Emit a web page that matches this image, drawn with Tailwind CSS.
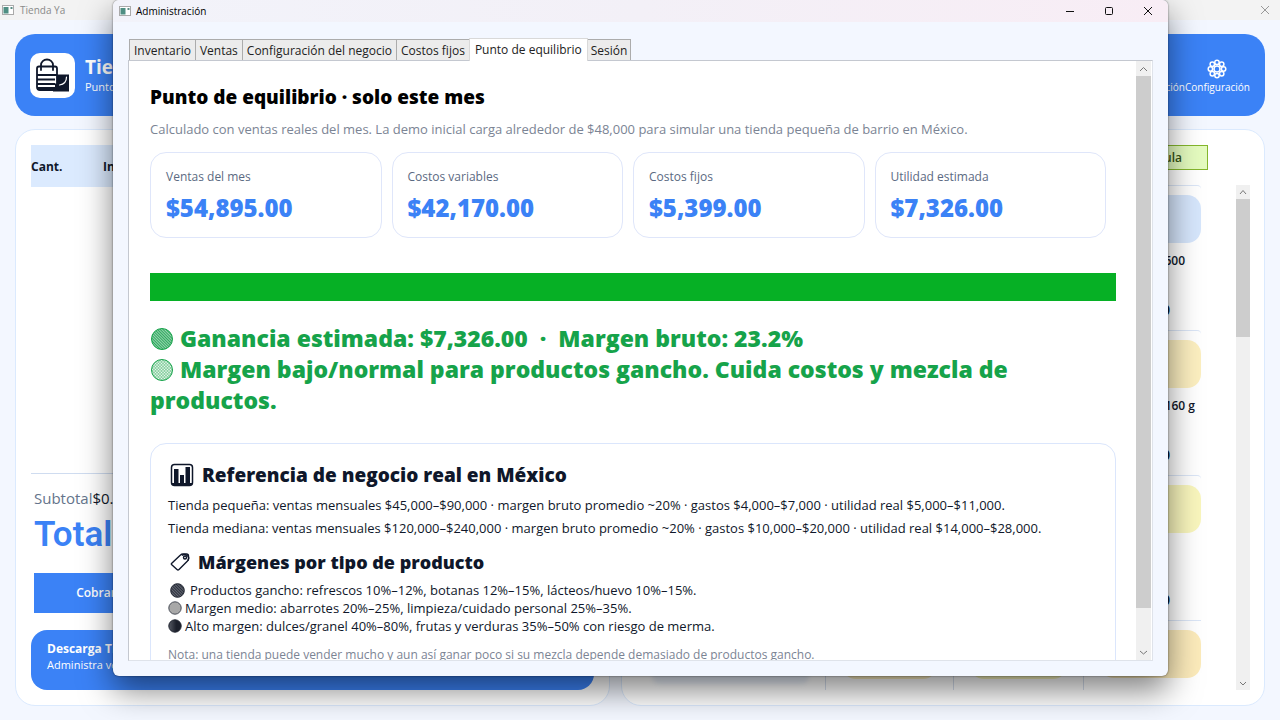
<!DOCTYPE html>
<html lang="es">
<head>
    <meta charset="UTF-8">
    <meta name="viewport" content="width=device-width, initial-scale=1.0">
    <title>Tienda Ya - Administración</title>
    <script src="https://cdn.jsdelivr.net/npm/@tailwindcss/browser@4"></script>
</head>
<body class="relative h-screen overflow-hidden bg-[#f3f7ff] font-['Open_Sans','Noto_Sans',sans-serif] text-[#0f172a]">

    <!-- Shared SVG patterns for the round bullets -->
    <svg class="absolute size-0" aria-hidden="true">
        <defs>
            <pattern id="greenLines" width="2" height="2" patternUnits="userSpaceOnUse" patternTransform="rotate(-45)">
                <rect width="2" height="2" fill="#2fa860"/><rect width="0.7" height="2" fill="#c3e8cf"/>
            </pattern>
            <pattern id="greenDots" width="3" height="3" patternUnits="userSpaceOnUse">
                <rect width="3" height="3" fill="#8fd2a6"/><circle cx="1" cy="1" r="0.8" fill="#f2fbf5"/><circle cx="2.5" cy="2.5" r="0.6" fill="#f2fbf5"/>
            </pattern>
            <pattern id="darkLines" width="2" height="2" patternUnits="userSpaceOnUse" patternTransform="rotate(-45)">
                <rect width="2" height="2" fill="#2b303c"/><rect width="0.6" height="2" fill="#8a8e97"/>
            </pattern>
            <linearGradient id="darkShade" x1="0" x2="1"><stop offset="0" stop-color="#555963"/><stop offset="0.6" stop-color="#1c202b"/></linearGradient>
        </defs>
    </svg>

    <!-- Main window -->
    <div class="flex h-full flex-col">
        <div class="flex h-5 shrink-0 items-center gap-[6px] bg-[#f3f3f3] pl-[2px] pr-[10px] text-[10px] text-[#8a8a8a]">
            <svg class="size-3" viewBox="0 0 12 12"><rect x="0.5" y="1.5" width="11" height="9" fill="#fff" stroke="#aaa"/><rect x="1.5" y="3" width="5" height="6.5" fill="#4f8f83"/><rect x="8.5" y="3" width="2" height="2" fill="#5a8c84"/></svg>
            <span>Tienda Ya</span>
            <button class="ml-auto" aria-label="Cerrar ventana"><svg class="size-[10px]" viewBox="0 0 10 10" stroke="#999" fill="none"><path d="M1 1l8 8M9 1l-8 8"/></svg></button>
        </div>

        <div class="flex min-h-0 flex-1 flex-col gap-[13px] px-[15px] pb-[14px] pt-[14px]">
            <header class="flex h-[82px] shrink-0 items-center rounded-[20px] bg-[#3b82f6] px-[15px] text-white">
                <div class="flex size-[45px] items-center justify-center rounded-[10px] bg-white">
                    <svg class="size-[36px]" viewBox="0 0 36 36" fill="none" stroke="#0f172a" stroke-width="1.8" stroke-linejoin="round">
                        <path d="M2 11.500q0-2 2-2h16q2 0 2 2V33H5q-3 0-3-3z" fill="#fff"/>
                        <path d="M6 13V8a6 5.500 0 0 1 12 0v5" stroke-linecap="round"/>
                        <path d="M2 18h20M2 22.500h18M2 27h18M2 31h18"/>
                        <path d="M22 17.500h12v17H18v-3h2v-5h2z" fill="#0f172a" stroke="none"/>
                        <path d="M31.500 20q0 7-7 8" stroke="#fff" stroke-linecap="round" stroke-width="1.200"/>
                    </svg>
                </div>
                <div class="ml-[10px]">
                    <h1 class="text-[19px] font-bold leading-6">Tienda Ya</h1>
                    <p class="text-[11px] leading-4">Punto de venta</p>
                </div>
                <nav class="ml-auto flex items-end pt-1 text-[10px] leading-4">
                    <button>Administración</button>
                    <button class="flex flex-col items-center">
                        <svg class="size-5" viewBox="0 0 20 20" fill="none" stroke="#fff" stroke-width="1.500">
                            <circle cx="10" cy="10" r="3"/>
                            <circle cx="10" cy="3.400" r="2.200"/><circle cx="14.700" cy="5.300" r="2.200"/><circle cx="16.600" cy="10" r="2.200"/><circle cx="14.700" cy="14.700" r="2.200"/>
                            <circle cx="10" cy="16.600" r="2.200"/><circle cx="5.300" cy="14.700" r="2.200"/><circle cx="3.400" cy="10" r="2.200"/><circle cx="5.300" cy="5.300" r="2.200"/>
                        </svg>
                        <span>Configuración</span>
                    </button>
                </nav>
            </header>

            <div class="grid min-h-0 flex-1 grid-cols-[595fr_645fr] grid-rows-[minmax(0,1fr)] gap-[11px]">
                <!-- Ticket -->
                <section class="flex flex-col rounded-[20px] border border-[#dbeafe] bg-white p-[15px]">
                    <table class="w-full bg-[#dbeafe] text-left text-[12px]">
                        <thead><tr class="h-[42px]"><th class="w-[72px] pt-[2px] font-bold">Cant.</th><th class="pt-[2px] font-bold">Inventario</th></tr></thead>
                    </table>
                    <div class="mt-auto border-t border-[#cfdcf0] px-[3px] pt-[14px]">
                        <div class="flex text-[15px] leading-5"><span class="text-[#64748b]">Subtotal</span><span>$0.00</span></div>
                        <div class="pt-[2px] font-[Roboto,sans-serif] text-[35px] font-semibold leading-[50px] text-[#3b82f6]">Total</div>
                        <button class="mt-[13px] h-10 w-[124px] bg-[#3b82f6] text-[12px] font-semibold text-white">Cobrar</button>
                    </div>
                    <button class="mt-[17px] h-[60px] shrink-0 rounded-[16px] bg-[#3b82f6] px-4 pb-[6px] text-left leading-4 text-white">
                        <span class="block text-[12px] font-bold">Descarga Tienda Ya</span>
                        <span class="block text-[11px]">Administra ventas</span>
                    </button>
                </section>

                <!-- Products -->
                <section class="flex flex-col rounded-[20px] border border-[#dbeafe] bg-white px-[14px] pb-[15px] pt-[15px]">
                    <div class="flex justify-end pr-[42px]">
                        <button class="h-[25px] w-[90px] border border-[#84b62c] bg-[#e4fbbf] pr-[25px] text-right text-[12px] font-semibold text-[#365314]">ula</button>
                    </div>
                    <div class="mt-[15px] flex min-h-0 flex-1">
                        <div class="grid min-h-0 flex-1 grid-cols-[190fr_128fr_129fr_117fr] grid-rows-[minmax(0,1fr)] overflow-hidden">
                            <div class="flex flex-col justify-end border-r border-[#d5deec] px-4 pb-[6px]"><div class="h-7 rounded-lg bg-[#e8eef8] blur-[2px]"></div></div>
                            <div class="flex flex-col justify-end border-r border-[#d5deec] px-4 pb-[11px]"><div class="h-12 rounded-[14px] bg-[#fcefc0]"></div></div>
                            <div class="flex flex-col justify-end border-r border-[#d5deec] px-4 pb-[11px]"><div class="h-12 rounded-[14px] bg-[#f9f6bd]"></div></div>
                            <div class="text-right text-[12px] font-semibold leading-4">
                                <article class="h-[145px] rounded-tr border-t border-[#dbe6f7] pt-[9px]">
                                    <div class="ml-4 h-12 rounded-[14px] bg-[#d6e6fc]"></div>
                                    <p class="pr-4 pt-[10px]">600</p>
                                    <p class="pr-[31px] pt-[33px] text-[14px] font-bold">0</p>
                                </article>
                                <article class="h-[145px] rounded-tr border-t border-[#dbe6f7] pt-[9px]">
                                    <div class="ml-4 h-12 rounded-[14px] bg-[#fcefc0]"></div>
                                    <p class="pr-[6px] pt-[10px]">160 g</p>
                                    <p class="pr-[31px] pt-[33px] text-[14px] font-bold">0</p>
                                </article>
                                <article class="h-[145px] rounded-tr border-t border-[#dbe6f7] pt-[9px]">
                                    <div class="ml-4 h-12 rounded-[14px] bg-[#f9f6bd]"></div>
                                    <p class="pr-[31px] pt-[59px] text-[14px] font-bold">0</p>
                                </article>
                                <article class="border-t border-[#dbe6f7] pt-[9px]">
                                    <div class="ml-4 h-12 rounded-[14px] bg-[#fcebbb]"></div>
                                </article>
                            </div>
                        </div>
                        <div class="ml-[35px] flex w-[14px] flex-col bg-[#f0f0f0]">
                            <svg class="h-[14px] w-full shrink-0" viewBox="0 0 14 14" fill="none" stroke="#777"><path d="M4 9l3-3.500L10 9"/></svg>
                            <div class="h-[138px] bg-[#cdcdcd]"></div>
                            <svg class="mt-auto h-[14px] w-full shrink-0" viewBox="0 0 14 14" fill="none" stroke="#777"><path d="M4 6l3 3 3-3"/></svg>
                        </div>
                    </div>
                </section>
            </div>
        </div>
    </div>

    <!-- Administration window -->
    <div role="dialog" aria-label="Administración" class="absolute bottom-[44px] left-[113px] right-[112px] top-0 flex flex-col rounded-[6px] bg-[#f3f7ff] shadow-[0_0_2px_rgba(0,0,0,0.6),0_14px_32px_rgba(0,0,0,0.5)]">
        <div class="flex h-[22px] shrink-0 items-center gap-[5px] rounded-t-[6px] bg-linear-to-r from-[#f2f3fa] via-[#f3f0f7] to-[#f8edf5] pl-[6px] pr-[15px] text-[10px] text-black">
            <svg class="size-3" viewBox="0 0 12 12"><rect x="0.5" y="1.5" width="11" height="9" fill="#fff" stroke="#aaa"/><rect x="1.5" y="3" width="5" height="6.5" fill="#4f8f83"/><rect x="8.500" y="3" width="2" height="2" fill="#5a8c84"/></svg>
            <span>Administración</span>
            <div class="ml-auto flex items-center gap-[29px]">
                <button aria-label="Minimizar"><svg class="size-[10px]" viewBox="0 0 10 10" stroke="#111"><path d="M1 5.500h8"/></svg></button>
                <button aria-label="Maximizar"><svg class="size-[10px]" viewBox="0 0 10 10" fill="none" stroke="#111"><rect x="1.500" y="1.500" width="7" height="7" rx="1"/></svg></button>
                <button aria-label="Cerrar"><svg class="size-[10px]" viewBox="0 0 10 10" stroke="#111"><path d="M1 1l8 8M9 1l-8 8"/></svg></button>
            </div>
        </div>

        <div class="flex min-h-0 flex-1 flex-col px-[15px] pb-[15px] pt-[16px]">
            <div role="tablist" class="flex items-end pl-px text-[12px] leading-[18px] text-[#222]">
                <button role="tab" class="h-[21px] border border-b-0 border-[#acacac] bg-[#ececec] px-1 pt-[2px]">Inventario</button>
                <button role="tab" class="h-[21px] border border-b-0 border-l-0 border-[#acacac] bg-[#ececec] px-1 pt-[2px]">Ventas</button>
                <button role="tab" class="h-[21px] border border-b-0 border-l-0 border-[#acacac] bg-[#ececec] px-1 pt-[2px]">Configuración del negocio</button>
                <button role="tab" class="h-[21px] border-t border-[#acacac] bg-[#ececec] px-1 pt-[2px]">Costos fijos</button>
                <button role="tab" aria-selected="true" class="relative z-10 -mb-px h-[23px] border border-b-0 border-[#d9d9d9] bg-white px-[5px]">Punto de equilibrio</button>
                <button role="tab" class="h-[21px] border border-b-0 border-l-0 border-[#acacac] bg-[#ececec] px-[3px] pt-[2px]">Sesión</button>
            </div>

            <div role="tabpanel" class="flex min-h-0 flex-1 border border-[#c4c8d0] border-b-[#dfe3ea] border-r-[#dfe3ea] bg-white pr-[1px]">
                <div class="min-h-0 flex-1 overflow-hidden pl-[21px] pr-[20px] pt-[24px]">
                    <h2 class="text-[19px] font-extrabold leading-6 text-black">Punto de equilibrio · solo este mes</h2>
                    <p class="mt-[10px] whitespace-nowrap text-[13px] leading-5 text-[#7b8494]">Calculado con ventas reales del mes. La demo inicial carga alrededor de $48,000 para simular una tienda pequeña de barrio en México.</p>

                    <div class="mr-[10px] mt-[13px] grid grid-cols-4 gap-[10px]">
                        <div class="h-[86px] rounded-[16px] border border-[#dfe6fa] px-[15px] pt-[14px]">
                            <p class="text-[12px] leading-5 text-[#5b6a82]">Ventas del mes</p>
                            <p class="mt-[5px] text-[24px] font-extrabold leading-8 text-[#3b82f6]">$54,895.00</p>
                        </div>
                        <div class="h-[86px] rounded-[16px] border border-[#dfe6fa] px-[15px] pt-[14px]">
                            <p class="text-[12px] leading-5 text-[#5b6a82]">Costos variables</p>
                            <p class="mt-[5px] text-[24px] font-extrabold leading-8 text-[#3b82f6]">$42,170.00</p>
                        </div>
                        <div class="h-[86px] rounded-[16px] border border-[#dfe6fa] px-[15px] pt-[14px]">
                            <p class="text-[12px] leading-5 text-[#5b6a82]">Costos fijos</p>
                            <p class="mt-[5px] text-[24px] font-extrabold leading-8 text-[#3b82f6]">$5,399.00</p>
                        </div>
                        <div class="h-[86px] rounded-[16px] border border-[#dfe6fa] px-[15px] pt-[14px]">
                            <p class="text-[12px] leading-5 text-[#5b6a82]">Utilidad estimada</p>
                            <p class="mt-[5px] text-[24px] font-extrabold leading-8 text-[#3b82f6]">$7,326.00</p>
                        </div>
                    </div>

                    <div role="progressbar" aria-label="Punto de equilibrio" aria-valuenow="100" class="mt-[35px] h-7 bg-[#06b025]"></div>

                    <p class="mt-[22px] text-[23px] font-extrabold leading-[31px] text-[#16a34a]">
                        <svg class="inline size-6 align-[-4px]" viewBox="0 0 24 24"><circle cx="12" cy="12" r="10.500" fill="url(#greenLines)" stroke="#16a34a"/></svg>
                        Ganancia estimada: $7,326.00 &nbsp;·&nbsp; Margen bruto: 23.2%<br>
                        <svg class="inline size-6 align-[-4px]" viewBox="0 0 24 24"><circle cx="12" cy="12" r="10.500" fill="url(#greenDots)" stroke="#16a34a"/></svg>
                        Margen bajo/normal para productos gancho. Cuida costos y mezcla de<br>productos.
                    </p>

                    <div class="mt-[27px] rounded-[16px] border border-[#dbe6fc] px-[17px] pb-5 pt-[19px]">
                        <h3 class="flex items-center gap-[8px] pl-[2px] text-[19px] font-extrabold leading-6">
                            <svg class="size-6" viewBox="0 0 24 24"><rect x="1.500" y="1.500" width="21" height="21" rx="3" fill="#fff" stroke="#0f172a" stroke-width="1.500"/><path d="M4 6h4.500v15H4zM10 12h4v9h-4zM15.500 4H20v17h-4.500z" fill="#0f172a"/><path d="M2 20h20v2H2z" fill="#0f172a"/></svg>
                            Referencia de negocio real en México
                        </h3>
                        <p class="mt-[7px] text-[13px] leading-[23px]">Tienda pequeña: ventas mensuales $45,000–$90,000 · margen bruto promedio ~20% · gastos $4,000–$7,000 · utilidad real $5,000–$11,000.</p>
                        <p class="text-[13px] leading-[23px]">Tienda mediana: ventas mensuales $120,000–$240,000 · margen bruto promedio ~20% · gastos $10,000–$20,000 · utilidad real $14,000–$28,000.</p>
                        <h3 class="mt-[10px] flex items-center gap-[8px] pl-[2px] text-[18px] font-extrabold leading-6">
                            <svg class="size-5" viewBox="0 0 20 20" fill="none" stroke="#0f172a" stroke-width="1.400" stroke-linejoin="round"><path d="M1.500 11.500L10.500 3q1-1 2.500-1h3.500q2 0 2 2v2.500q0 1.500-1 2.500L9 17.500q-1 1-2 0L1.500 12.500q-.5-.5 0-1z"/><circle cx="15" cy="5.500" r="1.500"/><path d="M12 3.500q2-2 5 0t1 5"/></svg>
                            Márgenes por tipo de producto
                        </h3>
                        <ul class="mt-[7px] text-[13px] leading-[18px]">
                            <li class="flex items-center gap-[5px] pl-[2px]"><svg class="size-[15px]" viewBox="0 0 15 15"><circle cx="7.500" cy="7.500" r="6.800" fill="url(#darkLines)" stroke="#1f2430"/></svg>Productos gancho: refrescos 10%–12%, botanas 12%–15%, lácteos/huevo 10%–15%.</li>
                            <li class="flex items-center gap-[3px]"><svg class="size-[14px]" viewBox="0 0 14 14"><circle cx="7" cy="7" r="6.200" fill="#a8a8a8" stroke="#4b4f59"/></svg>Margen medio: abarrotes 20%–25%, limpieza/cuidado personal 25%–35%.</li>
                            <li class="flex items-center gap-[3px]"><svg class="size-[14px]" viewBox="0 0 14 14"><circle cx="7" cy="7" r="6.200" fill="url(#darkShade)" stroke="#1f2430"/></svg>Alto margen: dulces/granel 40%–80%, frutas y verduras 35%–50% con riesgo de merma.</li>
                        </ul>
                        <p class="mt-[10px] text-[12px] leading-5 text-[#7b8494]">Nota: una tienda puede vender mucho y aun así ganar poco si su mezcla depende demasiado de productos gancho.</p>
                    </div>
                </div>

                <div class="flex w-[15px] flex-col bg-[#f0f0f0]">
                    <svg class="h-[15px] w-full shrink-0" viewBox="0 0 15 15" fill="none" stroke="#777"><path d="M4 10l3.500-3.500L11 10"/></svg>
                    <div class="h-[532px] bg-[#cdcdcd]"></div>
                    <svg class="mt-auto h-[15px] w-full shrink-0" viewBox="0 0 15 15" fill="none" stroke="#777"><path d="M4 6l3.500 3L11 6"/></svg>
                </div>
            </div>
        </div>
    </div>
</body>
</html>
